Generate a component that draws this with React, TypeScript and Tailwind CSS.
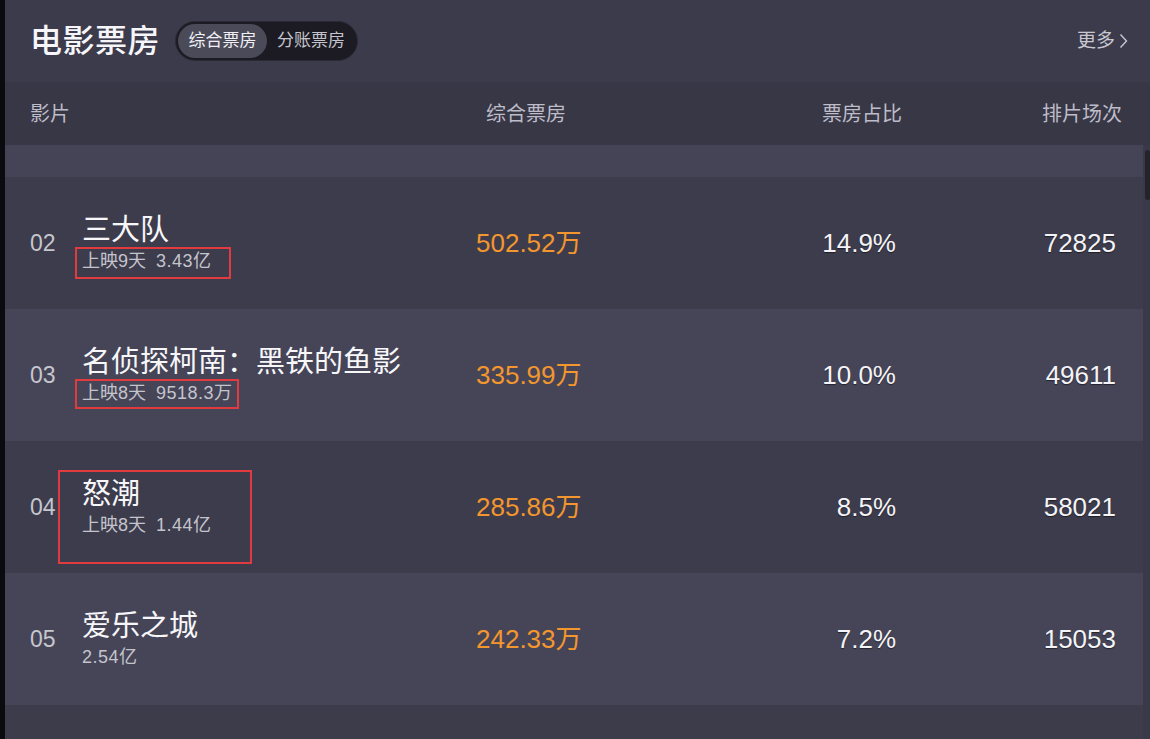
import React from "react";

type Row = {
  rank: string;
  name: string;
  days?: string;
  total: string;
  box: string;
  ratio: string;
  shows: string;
  light: boolean;
  mark?: { left: number; top: number; w: number; h: number };
};

const rows: Row[] = [
  { rank: "02", name: "三大队", days: "上映9天", total: "3.43亿", box: "502.52万", ratio: "14.9%", shows: "72825", light: false, mark: { left: 70, top: 70, w: 156, h: 32 } },
  { rank: "03", name: "名侦探柯南：黑铁的鱼影", days: "上映8天", total: "9518.3万", box: "335.99万", ratio: "10.0%", shows: "49611", light: true, mark: { left: 70, top: 70, w: 164, h: 30 } },
  { rank: "04", name: "怒潮", days: "上映8天", total: "1.44亿", box: "285.86万", ratio: "8.5%", shows: "58021", light: false, mark: { left: 53, top: 29, w: 194, h: 94 } },
  { rank: "05", name: "爱乐之城", total: "2.54亿", box: "242.33万", ratio: "7.2%", shows: "15053", light: true },
];

const font = { fontFamily: '"Liberation Sans", "Noto Sans CJK SC", sans-serif' };

export default function App() {
  return (
    <div className="w-[1150px] h-[739px] flex bg-black overflow-hidden" style={font}>
      {/* left edge */}
      <div className="w-[5px] bg-[#0b0b0f]" />

      <div className="flex-1 flex flex-col bg-[#3d3c4c]">
        {/* title bar */}
        <div className="h-[82px] flex items-center pl-[25px] pr-[22px] bg-[#3c3b4b]">
          <h1 className="text-[32px] leading-none font-medium text-[#f6f6fa] tracking-[0.5px]">电影票房</h1>
          <div className="ml-[15px] h-[40px] w-[183px] rounded-full bg-[#1c1b23] border border-[#2b2a34] flex items-center px-[2px]">
            <span className="h-[34px] w-[89px] rounded-full bg-[#4b4a59] flex items-center justify-center text-[17px] text-[#f0f0f4]">综合票房</span>
            <span className="flex-1 flex items-center justify-center text-[17px] text-[#c4c4cc]">分账票房</span>
          </div>
          <div className="ml-auto flex items-center gap-[4px] text-[19px] text-[#c8c8d2]">
            <span>更多</span>
            <svg width="9" height="16" viewBox="0 0 9 16" fill="none" stroke="#c8c8d2" strokeWidth="1.4">
              <polyline points="1.5,1.5 7.5,8 1.5,14.5" />
            </svg>
          </div>
        </div>

        {/* column header */}
        <div className="h-[63px] flex items-center pl-[25px] bg-[#383746] text-[20px] text-[#bdbcc8]">
          <div className="w-[446px]">影片</div>
          <div className="w-[220px] pl-[10px]">综合票房</div>
          <div className="w-[206px] text-right">票房占比</div>
          <div className="w-[220px] text-right">排片场次</div>
        </div>

        {/* list */}
        <div className="flex-1 flex">
          <div className="flex-1 flex flex-col">
            <div className="h-[32px] bg-[#454457]" />
            {rows.map((r) => (
              <div
                key={r.rank}
                className={`relative h-[132px] flex items-center pl-[25px] ${r.light ? "bg-[#464558]" : "bg-[#3d3c4c]"}`}
              >
                <div className="w-[52px] text-[23px] text-[#c6c6cf]">{r.rank}</div>
                <div className="w-[394px] flex flex-col">
                  <div className="text-[29px] leading-[34px] text-[#f7f7fa]">{r.name}</div>
                  <div className="text-[18px] leading-[24px] text-[#c4c4cc] mt-[2px]">
                    {r.days && <span className="mr-[10px]">{r.days}</span>}
                    <span className="tracking-[0.5px]">{r.total}</span>
                  </div>
                </div>
                <div className="w-[220px] text-[26px] text-[#f3962e]">{r.box}</div>
                <div className="w-[200px] text-right text-[26px] text-[#f4f4f8] [text-shadow:0_1px_1px_rgba(0,0,0,0.5)]">{r.ratio}</div>
                <div className="w-[220px] text-right text-[26px] text-[#f4f4f8] [text-shadow:0_1px_1px_rgba(0,0,0,0.5)]">{r.shows}</div>
                {r.mark && (
                  <div
                    className="absolute border-2 border-[#e23b3f] pointer-events-none"
                    style={{ left: r.mark.left, top: r.mark.top, width: r.mark.w, height: r.mark.h }}
                  />
                )}
              </div>
            ))}
            <div className="flex-1 bg-[#3d3c4b]" />
          </div>
          {/* scrollbar */}
          <div className="w-[7px] bg-[#3a3948] pt-[5px]">
            <div className="h-[50px] w-[5px] ml-[2px] rounded-[3px] bg-[#24232c]" />
          </div>
        </div>
      </div>
    </div>
  );
}
